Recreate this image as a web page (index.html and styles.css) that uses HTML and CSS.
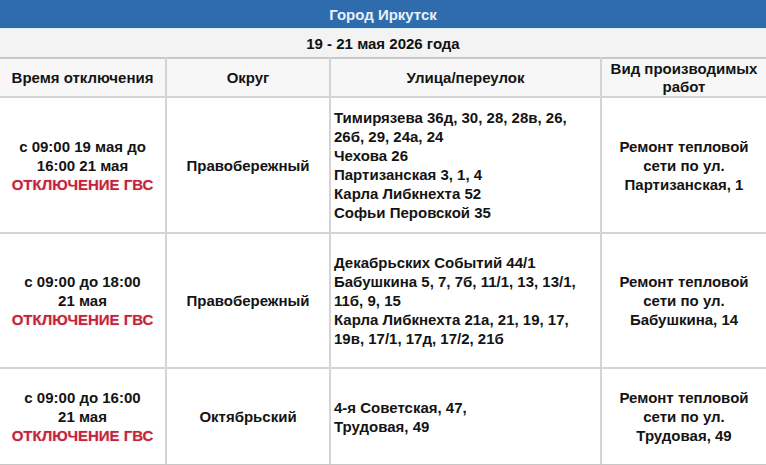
FILE: index.html
```html
<!DOCTYPE html>
<html lang="ru">
<head>
<meta charset="utf-8">
<title>Город Иркутск</title>
<link rel="stylesheet" href="styles.css">
</head>
<body>
<div class="title">Город Иркутск</div>
<div class="date">19 - 21 мая 2026 года</div>
<table class="grid">
  <colgroup>
    <col class="c1"><col class="c2"><col class="c3"><col class="c4">
  </colgroup>
  <thead>
    <tr class="head">
      <th>Время отключения</th>
      <th>Округ</th>
      <th>Улица/переулок</th>
      <th>Вид производимых<br>работ</th>
    </tr>
  </thead>
  <tbody>
    <tr class="r1">
      <td class="ctr">с 09:00 19 мая до<br>16:00 21 мая<br><span class="red">ОТКЛЮЧЕНИЕ ГВС</span></td>
      <td class="ctr">Правобережный</td>
      <td class="left">Тимирязева 36д, 30, 28, 28в, 26,<br>26б, 29, 24а, 24<br>Чехова 26<br>Партизанская 3, 1, 4<br>Карла Либкнехта 52<br>Софьи Перовской 35</td>
      <td class="ctr">Ремонт тепловой<br>сети по ул.<br>Партизанская, 1</td>
    </tr>
    <tr class="r2">
      <td class="ctr">с 09:00 до 18:00<br>21 мая<br><span class="red">ОТКЛЮЧЕНИЕ ГВС</span></td>
      <td class="ctr">Правобережный</td>
      <td class="left">Декабрьских Событий 44/1<br>Бабушкина 5, 7, 7б, 11/1, 13, 13/1,<br>11б, 9, 15<br>Карла Либкнехта 21а, 21, 19, 17,<br>19в, 17/1, 17д, 17/2, 21б</td>
      <td class="ctr">Ремонт тепловой<br>сети по ул.<br>Бабушкина, 14</td>
    </tr>
    <tr class="r3">
      <td class="ctr">с 09:00 до 16:00<br>21 мая<br><span class="red">ОТКЛЮЧЕНИЕ ГВС</span></td>
      <td class="ctr">Октябрьский</td>
      <td class="left">4-я Советская, 47,<br>Трудовая, 49</td>
      <td class="ctr">Ремонт тепловой<br>сети по ул.<br>Трудовая, 49</td>
    </tr>
  </tbody>
</table>
</body>
</html>
```
FILE: styles.css
```css
html, body {
  margin: 0;
  padding: 0;
  background: #ffffff;
}
body {
  width: 766px;
  height: 465px;
  overflow: hidden;
  font-family: "Liberation Sans", Arial, sans-serif;
  font-weight: bold;
  font-size: 15px;
  color: #141414;
}
.title {
  height: 28px;
  line-height: 29px;
  background: #2f6cae;
  border-bottom: 1px solid #dcf1f6;
  color: #e6f1fb;
  text-align: center;
}
.date {
  height: 28px;
  line-height: 30px;
  background: #f3f3f3;
  text-align: center;
  color: #111;
}
.grid {
  width: 766px;
  table-layout: fixed;
  border-collapse: collapse;
}
.c1 { width: 166px; }
.c2 { width: 164px; }
.c3 { width: 271px; }
.c4 { width: 165px; }
.grid th, .grid td {
  border: 2px solid #d4d4d4;
  padding: 0 3px;
  vertical-align: middle;
  line-height: 19px;
}
.grid tr > :first-child { border-left: 0; }
.grid tr > :last-child { border-right: 0; }
.head th {
  height: 37px;
  background: #f7f7f7;
  text-align: center;
  font-weight: bold;
  line-height: 18px;
  border-top-color: #c8c8c8;
}
.r1 td { height: 134px; }
.r2 td { height: 133px; }
.r3 td { height: 95px; border-bottom-color: #c6c6c6; }
.ctr { text-align: center; }
.left { text-align: left; padding-left: 3px; padding-right: 0; }
.red {
  color: #c0243a;
  text-shadow: 0 0 2px rgba(220, 80, 90, 0.35);
}
```
